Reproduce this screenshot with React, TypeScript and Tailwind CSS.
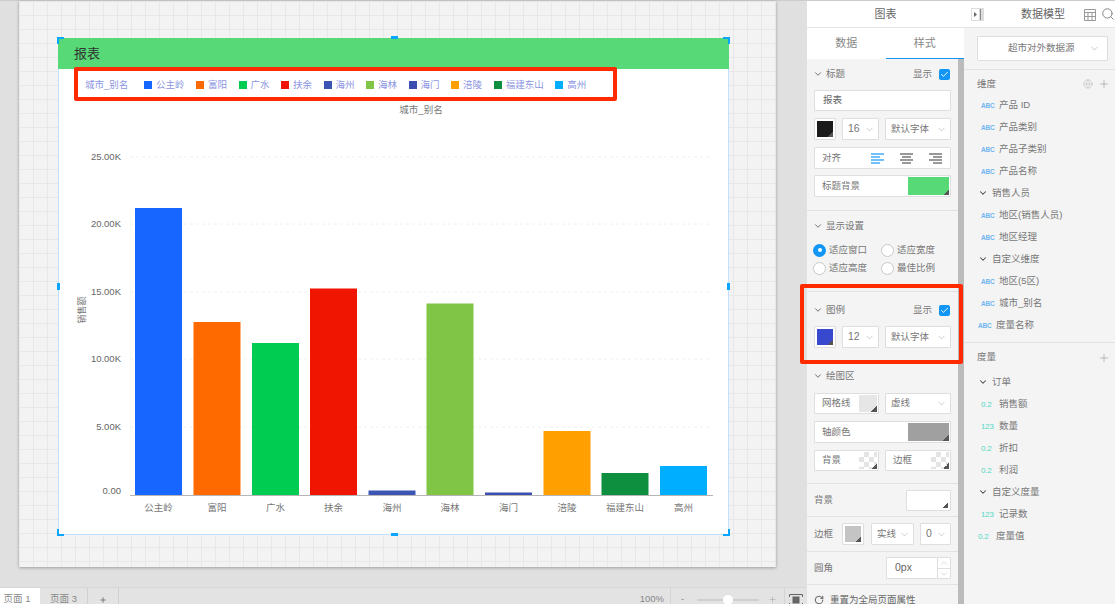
import type { FC, ReactNode } from "react";
import { ChevronDown, ChevronUp, Plus, Search, Globe, RotateCw, Check } from "lucide-react";

const bars = [
  { name: "公主岭", color: "#1766ff", x: 135, top: 208 },
  { name: "富阳", color: "#ff6a00", x: 193.5, top: 322 },
  { name: "广水", color: "#00cc52", x: 252, top: 343 },
  { name: "扶余", color: "#f01500", x: 310, top: 288.5 },
  { name: "海州", color: "#3c55b4", x: 368.5, top: 490.5 },
  { name: "海林", color: "#80c545", x: 426.5, top: 303.5 },
  { name: "海门", color: "#3c4fb0", x: 485, top: 492.5 },
  { name: "涪陵", color: "#ff9f00", x: 543.5, top: 431 },
  { name: "福建东山", color: "#0d8f3f", x: 601.5, top: 473 },
  { name: "高州", color: "#00aeff", x: 660, top: 466 },
];

const ticks = [
  { label: "25.00K", y: 157 },
  { label: "20.00K", y: 224 },
  { label: "15.00K", y: 292 },
  { label: "10.00K", y: 359 },
  { label: "5.00K", y: 427 },
];

const Chart: FC = () => (
  <svg width="669" height="435" viewBox="59 100 669 435" className="block">
    {ticks.map((t) => (
      <g key={t.label}>
        <line x1="130" x2="712" y1={t.y} y2={t.y} stroke="#f0f0f0" strokeDasharray="3 3" />
        <text x="121" y={t.y + 2.5} textAnchor="end" fontSize="9.5" fill="#666">{t.label}</text>
      </g>
    ))}
    <text x="121" y="493.5" textAnchor="end" fontSize="9.5" fill="#666">0.00</text>
    {bars.map((b) => (
      <g key={b.name}>
        <rect x={b.x} y={b.top} width="47" height={495 - b.top} fill={b.color} />
        <text x={b.x + 23.5} y="511" textAnchor="middle" fontSize="9.5" fill="#777">{b.name}</text>
      </g>
    ))}
    <line x1="130" x2="713" y1="495.5" y2="495.5" stroke="#b5b5b5" />
    <text x="421" y="113" textAnchor="middle" fontSize="9.5" fill="#777">城市_别名</text>
    <text transform="translate(85 310) rotate(-90)" textAnchor="middle" fontSize="9" fill="#777">销售额</text>
  </svg>
);

const Handle: FC<{ className: string }> = ({ className }) => (
  <div className={`absolute bg-[#0aa5ff] ${className}`} />
);

const Legend: FC = () => (
  <div className="flex items-center h-[31px] pt-[1px] pl-[26px] text-[9.5px] text-[#8c95e2]">
    <span className="w-[59px]">城市_别名</span>
    {bars.map((b) => (
      <span key={b.name} className="flex items-center mr-[11.5px]">
        <span className="w-[8px] h-[8px] mr-[4px]" style={{ background: b.color }} />
        {b.name}
      </span>
    ))}
  </div>
);

const Box: FC<{ className?: string; children?: ReactNode }> = ({ className = "", children }) => (
  <div className={`flex items-center bg-white border border-[#dedede] rounded-[1px] shrink-0 ${className}`}>
    {children}
  </div>
);

const Select: FC<{ label: string; className: string }> = ({ label, className }) => (
  <Box className={`h-[22px] justify-between pl-[5px] pr-[3px] ${className}`}>
    <span>{label}</span>
    <ChevronDown size={11} strokeWidth={1} className="text-[#999]" />
  </Box>
);

const Swatch: FC<{ color: string; className: string; checker?: boolean }> = ({ color, className, checker }) => (
  <div
    className={`relative ${checker ? "bg-[conic-gradient(#e4e4e4_25%,#fff_0_50%,#e4e4e4_0_75%,#fff_0)] bg-[size:10px_10px]" : ""} ${className}`}
    style={checker ? undefined : { background: color }}
  >
    <div className="absolute right-0 bottom-0 w-[6px] h-[6px] bg-[linear-gradient(135deg,transparent_50%,#555_50%)]" />
  </div>
);

const SectionHead: FC<{ title: string; show?: boolean }> = ({ title, show }) => (
  <div className="flex items-center justify-between h-[30px]">
    <span className="flex items-center gap-[3px]">
      <ChevronDown size={10} strokeWidth={2} className="-ml-[1px] text-[#555]" />
      {title}
    </span>
    {show && (
      <span className="flex items-center gap-[7px]">
        显示
        <span className="flex items-center justify-center w-[11px] h-[11px] mr-[1px] rounded-[2px] bg-[#1296f5]">
          <Check size={9} strokeWidth={2.5} className="text-white" />
        </span>
      </span>
    )}
  </div>
);

const AlignIcon: FC<{ color: string; align: "left" | "center" | "right" }> = ({ color, align }) => {
  const short = align === "left" ? 0 : align === "center" ? 2 : 4;
  return (
    <svg width="13" height="11" viewBox="0 0 13 11" stroke={color} strokeWidth="1.2">
      <line x1="0" x2="13" y1="1" y2="1" />
      <line x1={short} x2={short + 9} y1="4" y2="4" />
      <line x1="0" x2="13" y1="7" y2="7" />
      <line x1={short} x2={short + 9} y1="10" y2="10" />
    </svg>
  );
};

const Radio: FC<{ label: string; on?: boolean }> = ({ label, on }) => (
  <span className="flex items-center gap-[3px] h-[18px]">
    {on ? (
      <span className="flex items-center justify-center w-[13px] h-[13px] rounded-full bg-[#1296f5]">
        <span className="w-[4px] h-[4px] rounded-full bg-white" />
      </span>
    ) : (
      <span className="w-[13px] h-[13px] rounded-full bg-white border border-[#c8c8c8]" />
    )}
    {label}
  </span>
);

const StylePanel: FC = () => (
  <div className="flex flex-col w-[157px] shrink-0 border-t border-[#ccc] text-[9.5px] text-[#777] bg-[#f4f4f4]">
    <div className="flex items-center justify-center h-[27px] bg-white border-b border-[#e4e4e4] text-[11px] text-[#666]">图表</div>
    <div className="flex h-[31px] bg-white text-[11px] text-[#888] shrink-0">
      <div className="flex flex-1 items-center justify-center">数据</div>
      <div className="flex flex-1 items-center justify-center border-b border-[#1296f5]">样式</div>
    </div>
    <div className="flex flex-1 min-h-0">
      <div className="w-[151px]">
        <section className="h-[152px] px-[7px] border-b border-[#e2e2e2]">
          <SectionHead title="标题" show />
          <Box className="h-[21px] mt-[1px] pl-[8px] text-[#666]">报表</Box>
          <div className="flex gap-[6px] mt-[7px]">
            <Box className="w-[22px] h-[22px] p-[2px]"><Swatch color="#1a1a1a" className="w-full h-full" /></Box>
            <Select label="16" className="w-[37px] text-[10.5px]" />
            <Select label="默认字体" className="w-[66px]" />
          </div>
          <Box className="h-[22px] mt-[7px] pl-[7px]">
            <span className="w-[49px]">对齐</span>
            <span className="flex gap-[16px]">
              <AlignIcon color="#1296f5" align="left" />
              <AlignIcon color="#555" align="center" />
              <AlignIcon color="#555" align="right" />
            </span>
          </Box>
          <Box className="h-[22px] mt-[6px] pl-[7px] pr-[1px] justify-between">
            标题背景
            <Swatch color="#57d977" className="w-[41px] h-[18px]" />
          </Box>
        </section>
        <section className="h-[81px] px-[7px] border-b border-[#e2e2e2]">
          <SectionHead title="显示设置" />
          <div className="grid grid-cols-[68px_1fr] -ml-[1px]">
            <Radio label="适应窗口" on />
            <Radio label="适应宽度" />
            <Radio label="适应高度" />
            <Radio label="最佳比例" />
          </div>
        </section>
        <section className="h-[69px] pt-[3px] px-[7px]">
          <SectionHead title="图例" show />
          <div className="flex gap-[6px] mt-[1px]">
            <Box className="w-[22px] h-[22px] p-[2px]"><Swatch color="#3949cf" className="w-full h-full" /></Box>
            <Select label="12" className="w-[37px] text-[10.5px]" />
            <Select label="默认字体" className="w-[66px]" />
          </div>
        </section>
        <section className="h-[123px] px-[7px] border-b border-[#e2e2e2]">
          <SectionHead title="绘图区" />
          <div className="flex gap-[6px] mt-[2px]">
            <Box className="w-[65px] h-[21px] pl-[7px] pr-[1px] justify-between">
              网格线
              <Swatch color="#e6e6e6" className="w-[18px] h-[17px]" />
            </Box>
            <Select label="虚线" className="w-[66px] !h-[21px]" />
          </div>
          <Box className="h-[22px] mt-[7px] pl-[7px] pr-[1px] justify-between">
            轴颜色
            <Swatch color="#a0a0a0" className="w-[41px] h-[18px]" />
          </Box>
          <div className="flex gap-[6px] mt-[7px]">
            <Box className="w-[65px] h-[21px] pl-[7px] pr-[1px] justify-between">
              背景
              <Swatch color="" checker className="w-[18px] h-[17px]" />
            </Box>
            <Box className="w-[66px] h-[21px] pl-[7px] pr-[1px] justify-between">
              边框
              <Swatch color="" checker className="w-[18px] h-[17px]" />
            </Box>
          </div>
        </section>
        <section className="flex items-center justify-between h-[33px] px-[7px] border-b border-[#e2e2e2]">
          背景
          <Box className="w-[45px] h-[21px] p-[2px] border-[#cfcfcf]">
            <Swatch color="#fff" className="w-full h-full" />
          </Box>
        </section>
        <section className="flex items-center h-[35px] px-[7px] border-b border-[#e2e2e2]">
          <span className="w-[28px]">边框</span>
          <Box className="w-[22px] h-[22px] p-[2px]"><Swatch color="#c4c4c4" className="w-full h-full" /></Box>
          <Select label="实线" className="w-[43px] ml-[7px]" />
          <Select label="0" className="w-[31px] ml-[6px] text-[10.5px]" />
        </section>
        <section className="flex items-center justify-between h-[33px] px-[7px] border-b border-[#e2e2e2]">
          圆角
          <Box className="w-[65px] h-[22px] pl-[8px] justify-between text-[10.5px] text-[#666]">
            0px
            <span className="flex flex-col w-[13px] h-full border-l border-[#dedede] text-[#aaa]">
              <span className="flex flex-1 items-center justify-center border-b border-[#dedede]"><ChevronUp size={10} strokeWidth={1} /></span>
              <span className="flex flex-1 items-center justify-center"><ChevronDown size={10} strokeWidth={1} /></span>
            </span>
          </Box>
        </section>
        <div className="flex items-center gap-[6px] h-[30px] pl-[7px] text-[#666]">
          <RotateCw size={10} strokeWidth={2} className="text-[#444]" />
          重置为全局页面属性
        </div>
      </div>
      <div className="w-[6px] bg-[#bbb]" />
    </div>
  </div>
);

const Tag: FC<{ kind: "abc" | "dec" | "num" }> = ({ kind }) =>
  kind === "abc" ? (
    <span className="text-[6.5px] font-bold tracking-tight text-[#6fb4f2]">ABC</span>
  ) : (
    <span className="text-[8px] tracking-tight text-[#4fd8c4]">{kind === "dec" ? "0.2" : "123"}</span>
  );

type Row = { label: string; kind?: "abc" | "dec" | "num"; outer?: boolean };

const dimensions: Row[] = [
  { label: "产品 ID", kind: "abc" },
  { label: "产品类别", kind: "abc" },
  { label: "产品子类别", kind: "abc" },
  { label: "产品名称", kind: "abc" },
  { label: "销售人员" },
  { label: "地区(销售人员)", kind: "abc" },
  { label: "地区经理", kind: "abc" },
  { label: "自定义维度" },
  { label: "地区(5区)", kind: "abc" },
  { label: "城市_别名", kind: "abc" },
  { label: "度量名称", kind: "abc", outer: true },
];

const measures: Row[] = [
  { label: "订单" },
  { label: "销售额", kind: "dec" },
  { label: "数量", kind: "num" },
  { label: "折扣", kind: "dec" },
  { label: "利润", kind: "dec" },
  { label: "自定义度量" },
  { label: "记录数", kind: "num" },
  { label: "度量值", kind: "dec", outer: true },
];

const TreeRow: FC<{ row: Row }> = ({ row }) =>
  row.kind ? (
    <div className={`flex items-center h-[22px] ${row.outer ? "pl-[14px]" : "pl-[17px]"}`}>
      <span className="w-[17px]"><Tag kind={row.kind} /></span>
      <span className="ml-[1px]">{row.label}</span>
    </div>
  ) : (
    <div className="flex items-center gap-[4px] h-[22px] pl-[14px]">
      <ChevronDown size={10} strokeWidth={2.5} className="text-[#444]" />
      {row.label}
    </div>
  );

const ModelPanel: FC = () => (
  <div className="flex flex-col w-[151px] shrink-0 border-t border-[#ccc] text-[9.5px] text-[#777] bg-[#f4f4f4]">
    <div className="relative flex items-center justify-center h-[27px] bg-white border-b border-[#e4e4e4] pl-[7px] text-[11px] text-[#666]">
      数据模型
      <svg width="13" height="13" viewBox="0 0 13 13" className="absolute left-[7px] top-[7px]">
        <rect width="13" height="13" fill="#ddd" />
        <rect x="1" y="1" width="7" height="11" fill="#fff" />
        <path d="M3 4l3 2.500-3 2.500z" fill="#666" />
        <rect x="9" y="1" width="1" height="11" fill="#888" />
      </svg>
      <svg width="12" height="12" viewBox="0 0 12 12" fill="none" stroke="#999" className="absolute left-[120px] top-[8px]">
        <path d="M.5.500h11v11H.500zM.500 3.500h11M.500 7.500h11M4 3.500v8M8 3.500v8" />
      </svg>
      <Search size={14} strokeWidth={1.5} className="absolute left-[137px] top-[6px] text-[#777]" />
    </div>
    <div className="h-[42px] pt-[8px] pl-[13px] pr-[7px] border-b border-[#e2e2e2]">
      <Box className="w-[131px] h-[25px] justify-between pl-[30px] pr-[7px]">
        超市对外数据源
        <ChevronDown size={11} strokeWidth={1} className="text-[#888]" />
      </Box>
    </div>
    <section className="h-[273px] border-b border-[#e2e2e2]">
      <div className="flex items-center justify-between h-[24px] pt-[4px] pl-[13px] pr-[5px]">
        维度
        <span className="flex items-center gap-[5px] text-[#aaa]">
          <Globe size={10} strokeWidth={1} />
          <Plus size={12} strokeWidth={1.5} />
        </span>
      </div>
      {dimensions.map((r) => <TreeRow key={r.label} row={r} />)}
    </section>
    <section>
      <div className="flex items-center justify-between h-[28px] pt-[1px] pl-[13px] pr-[5px]">
        度量
        <Plus size={12} strokeWidth={1.5} className="text-[#aaa]" />
      </div>
      {measures.map((r) => <TreeRow key={r.label} row={r} />)}
    </section>
  </div>
);

const BottomBar: FC = () => (
  <div className="flex items-center h-[24px] shrink-0 bg-[#e3e3e3] border-t border-[#d8d8d8] text-[9.5px] text-[#888]">
    <div className="flex items-center justify-center w-[40px] h-full pr-[6px] bg-white">页面 1</div>
    <div className="flex items-center justify-center w-[48px] h-full border-r border-[#d0d0d0]">页面 3</div>
    <div className="flex items-center justify-center w-[31px] h-full border-r border-[#d0d0d0]">
      <Plus size={8} strokeWidth={2} className="text-[#555]" />
    </div>
    <span className="ml-auto">100%</span>
    <div className="flex items-center w-[115px] h-full ml-[6px] pl-[10px] border-x border-[#d4d4d4]">
      <span className="w-[16px]">-</span>
      <div className="relative w-[62px] h-[2px] bg-[#cfcfcf]">
        <div className="absolute left-[26px] top-[-4px] w-[10px] h-[10px] rounded-full bg-white" />
      </div>
      <Plus size={9} strokeWidth={1} className="ml-[9px] text-[#888]" />
    </div>
    <svg width="14" height="12" viewBox="0 0 14 12" fill="none" stroke="#666" className="mx-[4px]">
      <path d="M.5 3V.500h13V3M.500 9v2.500h13V9" />
      <rect x="4" y="3" width="6" height="6" fill="#666" />
    </svg>
  </div>
);

export default function App() {
  return (
    <div className="relative flex w-[1115px] h-[604px] overflow-hidden bg-[#e0e0e0] font-['Liberation_Sans','Noto_Sans_CJK_SC',sans-serif]">
      <div className="flex flex-col w-[807px] shrink-0">
        <div className="h-[587px] shrink-0 pl-[19px] border-t border-[#ccc]">
          <div className="w-[757px] h-[566px] pt-[37px] pl-[39px] bg-[#f3f3f3] bg-[linear-gradient(#e8e8e8_1px,transparent_1px),linear-gradient(90deg,#e8e8e8_1px,transparent_1px)] bg-[size:14px_14px] shadow-[0_1px_3px_rgba(0,0,0,0.3)]">
            <div className="relative w-[671px] h-[497px] bg-white border-x border-b border-[#bfe0ff]">
              <div className="flex items-center h-[31px] -mx-[1px] pl-[16px] bg-[#57d977] text-[13px] text-[#333]">报表</div>
              <Legend />
              <Chart />
              <Handle className="left-[-2px] top-[-1px] w-[7px] h-[2px]" />
              <Handle className="left-[-2px] top-[-1px] w-[2px] h-[7px]" />
              <Handle className="right-[-2px] top-[-1px] w-[7px] h-[2px]" />
              <Handle className="right-[-2px] top-[-1px] w-[2px] h-[7px]" />
              <Handle className="left-[-2px] bottom-[-2px] w-[7px] h-[2px]" />
              <Handle className="left-[-2px] bottom-[-2px] w-[2px] h-[7px]" />
              <Handle className="right-[-2px] bottom-[-2px] w-[7px] h-[2px]" />
              <Handle className="right-[-2px] bottom-[-2px] w-[2px] h-[7px]" />
              <Handle className="left-[332px] top-[-2px] w-[7px] h-[3px]" />
              <Handle className="left-[332px] bottom-[-2px] w-[7px] h-[3px]" />
              <Handle className="left-[-2px] top-[245px] w-[3px] h-[7px]" />
              <Handle className="right-[-2px] top-[245px] w-[3px] h-[7px]" />
            </div>
          </div>
        </div>
        <BottomBar />
      </div>
      <StylePanel />
      <ModelPanel />
      <div className="absolute left-[74px] top-[67px] w-[543px] h-[34px] border-[4px] border-[#ff2a00] rounded-[2px]" />
      <div className="absolute left-[800px] top-[284px] w-[163px] h-[80px] border-[4px] border-[#ff2a00] rounded-[2px]" />
    </div>
  );
}
